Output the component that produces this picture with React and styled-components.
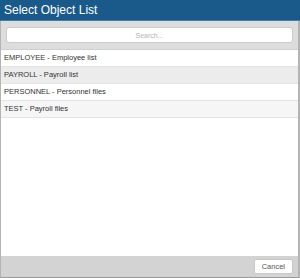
import React from 'react'
import styled, { createGlobalStyle } from 'styled-components'

const GlobalStyle = createGlobalStyle`
  html, body {
    margin: 0;
    padding: 0;
    background: #ffffff;
  }
  #root {
    height: 278px;
  }
`

const Dialog = styled.div`
  display: flex;
  flex-direction: column;
  width: 300px;
  height: 278px;
  box-sizing: border-box;
  border-left: 1px solid #b4b4b4;
  border-right: 2px solid #b4b4b4;
  border-bottom: 1px solid #9a9a9a;
  font-family: 'Liberation Sans', Arial, sans-serif;
  background: #ffffff;
`

const Header = styled.div`
  height: 20px;
  background: #1a5a8b;
  border-bottom: 1px solid #3f7fb0;
  color: #ffffff;
  font-size: 12px;
  line-height: 20px;
  padding-left: 4px;
  margin: 0 -2px 0 -1px;
`

const SearchBar = styled.div`
  background: #dddddd;
  padding: 6px 5px 6px 5px;
  border-bottom: 1px solid #cfcfcf;
`

const SearchInput = styled.input`
  display: block;
  width: 100%;
  box-sizing: border-box;
  height: 16px;
  border: 1px solid #cccccc;
  border-radius: 3px;
  background: #ffffff;
  font-family: inherit;
  font-size: 7px;
  text-align: center;
  outline: none;
  padding: 0;
  &::placeholder {
    color: #b5b5b5;
  }
`

const List = styled.div`
  flex: 1;
  display: flex;
  flex-direction: column;
`

const Row = styled.div`
  height: 16px;
  line-height: 16px;
  padding-left: 3px;
  font-size: 7.5px;
  color: #333333;
  background: ${({ shade }) => shade || '#ffffff'};
  border-bottom: 1px solid #e4e4e4;
`

const Footer = styled.div`
  height: 21px;
  background: #d3d3d3;
  display: flex;
  align-items: center;
  justify-content: flex-end;
  padding-right: 5px;
`

const CancelButton = styled.button`
  height: 15px;
  padding: 0 7px;
  background: #ffffff;
  border: 1px solid #c8c8c8;
  border-radius: 2px;
  font-family: inherit;
  font-size: 7.5px;
  color: #555555;
`

const items = [
  { label: 'EMPLOYEE - Employee list' },
  { label: 'PAYROLL - Payroll list', shade: '#ececec' },
  { label: 'PERSONNEL - Personnel files' },
  { label: 'TEST - Payroll files', shade: '#f6f6f6' }
]

export default function App() {
  return (
    <>
      <GlobalStyle />
      <Dialog>
        <Header>Select Object List</Header>
        <SearchBar>
          <SearchInput placeholder="Search..." />
        </SearchBar>
        <List>
          {items.map(item => (
            <Row key={item.label} shade={item.shade}>
              {item.label}
            </Row>
          ))}
        </List>
        <Footer>
          <CancelButton>Cancel</CancelButton>
        </Footer>
      </Dialog>
    </>
  )
}
